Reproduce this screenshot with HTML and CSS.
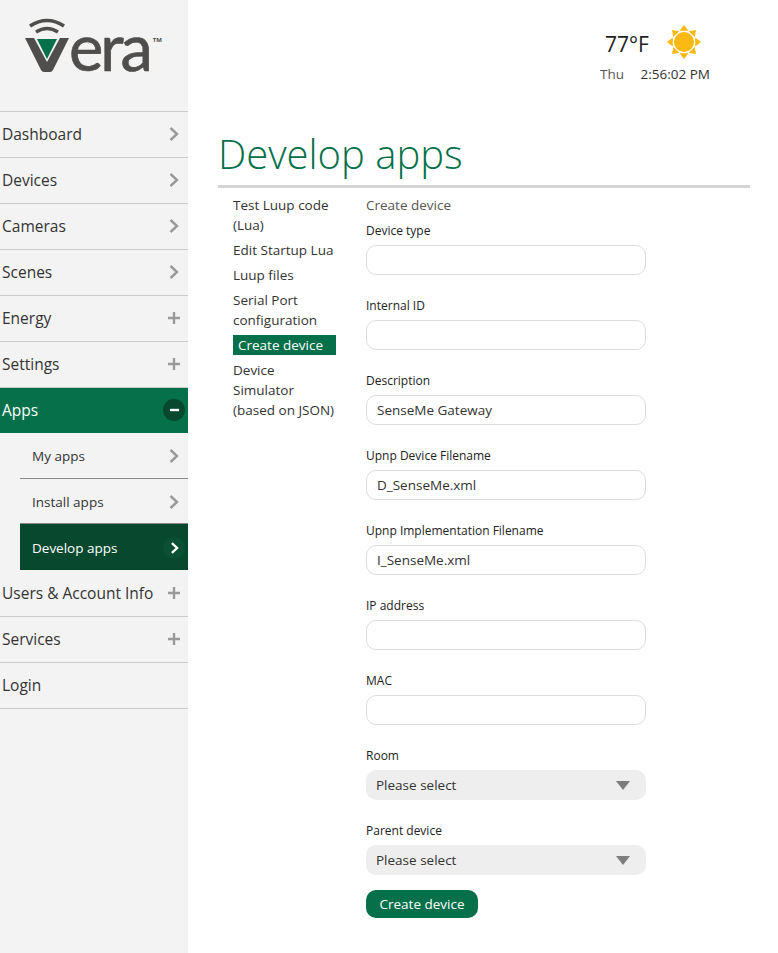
FILE: index.html
```html
<!DOCTYPE html>
<html lang="en">
<head>
<meta charset="utf-8">
<title>Develop apps</title>
<link rel="stylesheet" href="styles.css">
</head>
<body>
<aside class="sidebar">
  <div class="logo">
    <svg class="logo-mark" width="46" height="56" viewBox="0 0 46 56">
      <path d="M5 8 Q22 -3 39 8" class="arc"/>
      <path d="M11 14 Q22 7 33 14" class="arc"/>
      <path d="M0 20 H9 L22 44 L35 20 H44 L28 52 Q27 54 25 54 H19 Q17 54 16 52 Z" fill="#4f4e4c"/>
      <path d="M12 21 H32 L22 41 Z" fill="#05704a"/>
    </svg>
    <span class="logo-text">era</span><span class="logo-tm">TM</span>
  </div>
  <nav>
    <a class="row"><span>Dashboard</span><svg class="ic" viewBox="0 0 12 16"><path d="M2.5 2 L9 8 L2.5 14"/></svg></a>
    <a class="row"><span>Devices</span><svg class="ic" viewBox="0 0 12 16"><path d="M2.5 2 L9 8 L2.5 14"/></svg></a>
    <a class="row"><span>Cameras</span><svg class="ic" viewBox="0 0 12 16"><path d="M2.5 2 L9 8 L2.5 14"/></svg></a>
    <a class="row"><span>Scenes</span><svg class="ic" viewBox="0 0 12 16"><path d="M2.5 2 L9 8 L2.5 14"/></svg></a>
    <a class="row"><span>Energy</span><svg class="ic" viewBox="0 0 12 16"><path d="M0 8 H12 M6 2 V14"/></svg></a>
    <a class="row"><span>Settings</span><svg class="ic" viewBox="0 0 12 16"><path d="M0 8 H12 M6 2 V14"/></svg></a>
    <a class="row active"><span>Apps</span><span class="badge"><svg class="ic-in" viewBox="0 0 12 12"><path d="M1 6 H11"/></svg></span></a>
    <a class="row sub first"><span>My apps</span><svg class="ic" viewBox="0 0 12 16"><path d="M2.5 2 L9 8 L2.5 14"/></svg></a>
    <a class="row sub second"><span>Install apps</span><svg class="ic" viewBox="0 0 12 16"><path d="M2.5 2 L9 8 L2.5 14"/></svg></a>
    <a class="row sub current"><span>Develop apps</span><span class="badge dark"><svg class="ic-in" viewBox="0 0 12 16"><path d="M3 2.5 L9 8 L3 13.5"/></svg></span></a>
    <a class="row after"><span>Users &amp; Account Info</span><svg class="ic" viewBox="0 0 12 16"><path d="M0 8 H12 M6 2 V14"/></svg></a>
    <a class="row"><span>Services</span><svg class="ic" viewBox="0 0 12 16"><path d="M0 8 H12 M6 2 V14"/></svg></a>
    <a class="row"><span>Login</span></a>
  </nav>
</aside>
<main class="main">
  <header class="top">
    <div class="weather">
      <div class="temp-line">
        <span class="temp">77°F</span>
        <svg class="sun" width="34" height="34" viewBox="0 0 34 34">
          <circle cx="17" cy="17" r="10" fill="#fdb913"/>
          <path fill="#fdb913" d="M17 0 L21.5 5.8 H12.5 Z M17 34 L21.5 28.2 H12.5 Z M0 17 L5.8 12.5 V21.5 Z M34 17 L28.2 12.5 V21.5 Z M5 5 L12.3 6.3 L6.3 12.3 Z M29 5 L27.7 12.3 L21.7 6.3 Z M5 29 L6.3 21.7 L12.3 27.7 Z M29 29 L21.7 27.7 L27.7 21.7 Z"/>
        </svg>
      </div>
      <div class="time-line"><span class="day">Thu</span><span>2:56:02 PM</span></div>
    </div>
  </header>
  <h1 class="title">Develop apps</h1>
  <div class="content">
    <ul class="side-links">
      <li>Test Luup code (Lua)</li>
      <li>Edit Startup Lua</li>
      <li>Luup files</li>
      <li>Serial Port configuration</li>
      <li class="selected">Create device</li>
      <li>Device Simulator (based on JSON)</li>
    </ul>
    <form class="form">
      <div class="form-title">Create device</div>
      <div class="field"><label>Device type</label><input type="text"></div>
      <div class="field"><label>Internal ID</label><input type="text"></div>
      <div class="field"><label>Description</label><input type="text" value="SenseMe Gateway"></div>
      <div class="field"><label>Upnp Device Filename</label><input type="text" value="D_SenseMe.xml"></div>
      <div class="field"><label>Upnp Implementation Filename</label><input type="text" value="I_SenseMe.xml"></div>
      <div class="field"><label>IP address</label><input type="text"></div>
      <div class="field"><label>MAC</label><input type="text"></div>
      <div class="field"><label>Room</label><div class="select">Please select<i class="caret"></i></div></div>
      <div class="field last"><label>Parent device</label><div class="select">Please select<i class="caret"></i></div></div>
      <button class="btn" type="button">Create device</button>
    </form>
  </div>
</main>
</body>
</html>
```
FILE: styles.css
```css
* { box-sizing: border-box; }
html, body { margin: 0; height: 100%; }
body {
  display: flex;
  min-height: 953px;
  font-family: "Open Sans", sans-serif;
  color: #3c3c3c;
  background: #fff;
  overflow: hidden;
}
.sidebar { width: 188px; flex: none; background: #f3f3f3; }
.logo { height: 111px; display: flex; align-items: flex-start; padding: 18px 0 0 25px; }
.logo-mark { flex: none; }
.arc { fill: none; stroke: #4f4e4c; stroke-width: 3.6; }
.logo-text {
  font-family: Lato, sans-serif;
  font-size: 65px;
  line-height: 56px;
  color: #4f4e4c;
  -webkit-text-stroke: 0.7px #4f4e4c;
  letter-spacing: -3px;
  margin-left: -2px;
  margin-top: 0;
}
.logo-tm { font-size: 6px; line-height: 8px; font-weight: 700; color: #4f4e4c; margin: 18px 0 0 3px; }
nav { border-top: 1px solid #ccc; }
.row {
  height: 46px;
  display: flex;
  align-items: center;
  justify-content: space-between;
  padding: 0 8px 2px 2px;
  font-size: 15.5px;
  color: #333;
  border-bottom: 1px solid #ccc;
}
.row.active { background: #05704a; color: #fff; border-bottom: 0; height: 45px; padding-right: 3px; padding-bottom: 1px; }
.row.sub { margin-left: 20px; padding: 0 8px 0 12px; font-size: 13.5px; border-bottom: 1px solid #888; }
.row.sub.second { height: 45px; padding-top: 1px; }
.row.sub.current { background: #07482f; color: #fff; border-bottom: 0; padding: 1px 3px 0 12px; }
.row.after { height: 47px; padding-bottom: 1px; }
.ic { width: 12px; height: 16px; fill: none; stroke: #999; stroke-width: 2.4; }
.badge {
  width: 22px; height: 22px; border-radius: 50%;
  background: #07482f;
  display: flex; align-items: center; justify-content: center;
}
.badge.dark { background: #0b4f35; }
.ic-in { width: 11px; height: 14px; fill: none; stroke: #fff; stroke-width: 2.6; }
.main { flex: 1; min-width: 0; padding: 0 28px 0 30px; }
.top { height: 111px; display: flex; justify-content: flex-end; }
.weather { width: 110px; margin-right: 40px; padding-top: 25px; }
.temp-line { display: flex; align-items: center; height: 34px; padding-left: 5px; }
.temp { font-size: 21px; color: #222; width: 62px; padding-top: 3px; }
.time-line { display: flex; justify-content: space-between; font-size: 13.5px; line-height: 18px; margin-top: 6px; color: #333; }
.day { color: #555; }
.title {
  margin: 0;
  height: 77px;
  padding-top: 13px;
  font-size: 40px;
  line-height: 60px;
  font-weight: 300;
  color: #05704a;
  border-bottom: 3px solid #d5d5d5;
}
.content { display: flex; }
.side-links { list-style: none; margin: 7px 0 0; padding: 0 0 0 15px; width: 148px; font-size: 13.5px; line-height: 20px; }
.side-links li { margin-bottom: 5px; color: #333; width: 103px; }
.side-links li.selected { background: #05704a; color: #fff; padding-left: 5px; }
.form { width: 280px; padding-top: 7px; }
.form-title { font-size: 13.5px; line-height: 20px; color: #555; margin-bottom: 7px; }
.field { height: 75px; }
.field label { display: block; font-size: 12px; line-height: 17px; height: 17px; color: #222; margin-bottom: 6px; }
.field input {
  display: block; width: 280px; height: 30px;
  border: 1px solid #ddd; border-radius: 10px;
  padding: 0 10px; font: 13.5px "Open Sans", sans-serif; color: #333; background: #fff; outline: 0;
}
.select {
  position: relative; height: 30px; width: 280px;
  background: #eee; border-radius: 10px;
  padding-left: 10px; font-size: 13.5px; line-height: 30px; color: #333;
}
.caret {
  position: absolute; right: 16px; top: 11px;
  border-left: 7px solid transparent; border-right: 7px solid transparent; border-top: 9px solid #7d7d7d;
}
.field.last { height: 68px; }
.btn {
  display: block; width: 112px; height: 28px; border: 0; border-radius: 10px;
  background: #05704a; color: #fff; font: 13.5px "Open Sans", sans-serif; padding: 0;
}
```
